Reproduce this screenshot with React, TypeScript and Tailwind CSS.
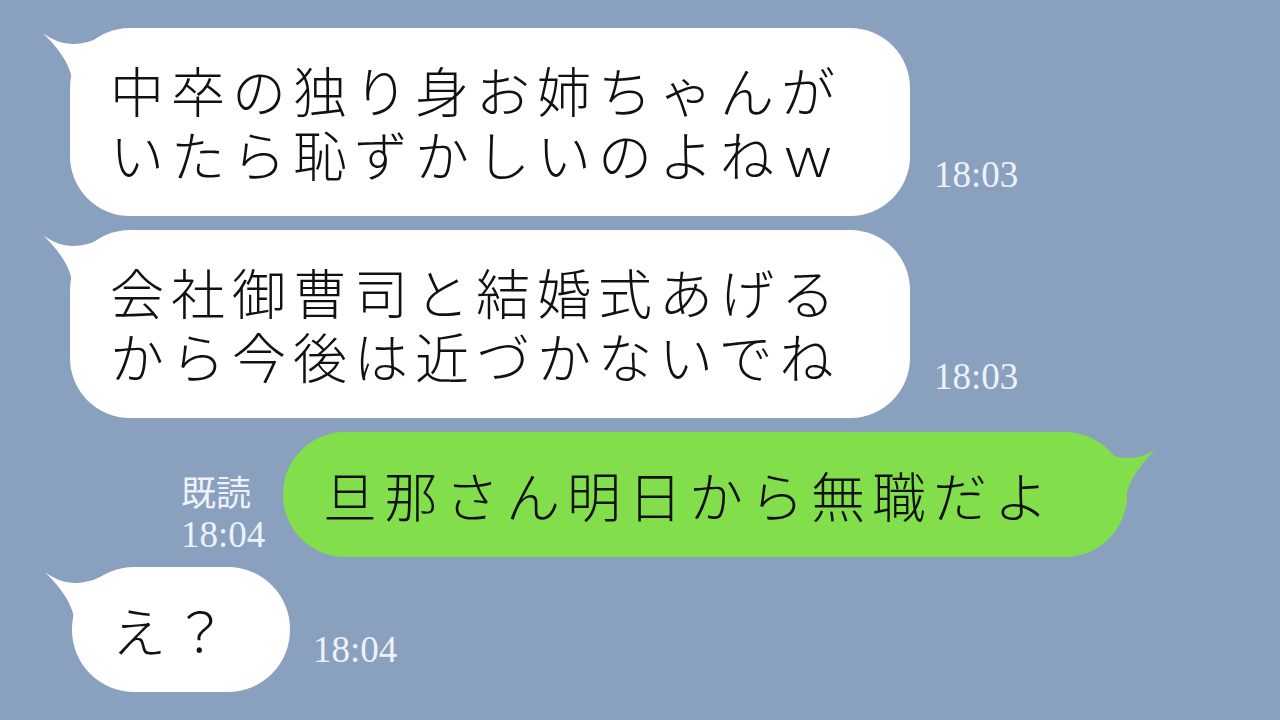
import React from 'react';

const jp = { fontFamily: '"Noto Sans CJK JP", "Noto Sans", sans-serif' };
const serif = { fontFamily: '"Liberation Serif", "Noto Sans CJK JP", serif' };

function LeftTail() {
  return (
    <svg className="absolute left-[-30px] top-0" width="70" height="70" viewBox="0 0 70 70">
      <path d="M3 5 C 20 18, 40 20, 62 8 L 62 70 L 32 70 L 32 50 C 28 32, 16 18, 3 5 Z" fill="#ffffff" />
    </svg>
  );
}

function RightTail() {
  return (
    <svg className="absolute right-[-32px] top-0" width="70" height="70" viewBox="0 0 70 70">
      <path d="M67 16 C 50 30, 28 30, 8 14 L 8 70 L 38 70 L 38 60 C 44 40, 56 30, 67 16 Z" fill="#82df4b" />
    </svg>
  );
}

function Time({ children }: { children: React.ReactNode }) {
  return (
    <span className="text-[37px] leading-none text-[#eef2f8]" style={serif}>
      {children}
    </span>
  );
}

function WhiteBubble({ lines, time }: { lines: string[]; time: string }) {
  return (
    <div className="flex items-end">
      <div
        className="relative ml-[70px] flex h-[188px] w-[840px] flex-col justify-center rounded-[60px] bg-white pl-[40px] text-[54px] font-light leading-[64px] tracking-[7px] text-[#111]"
        style={jp}
      >
        <LeftTail />
        {lines.map((l, i) => (
          <div key={i} className="relative whitespace-nowrap">{l}</div>
        ))}
      </div>
      <div className="mb-[23px] ml-[24px]">
        <Time>{time}</Time>
      </div>
    </div>
  );
}

export default function App() {
  return (
    <div className="flex h-[720px] w-[1280px] flex-col gap-[14px] overflow-hidden bg-[#89a0bf] pt-[28px]">
      <WhiteBubble lines={['中卒の独り身お姉ちゃんが', 'いたら恥ずかしいのよねｗ']} time="18:03" />
      <WhiteBubble lines={['会社御曹司と結婚式あげる', 'から今後は近づかないでね']} time="18:03" />

      {/* sent message */}
      <div className="ml-[181px] flex items-end">
        <div className="flex w-[102px] flex-col text-[#eef2f8]">
          <span className="text-[35px] leading-[43px]" style={serif}>既読</span>
          <span className="mb-[4px] text-[37px] leading-[37px]" style={serif}>18:04</span>
        </div>
        <div
          className="relative flex h-[125px] w-[844px] items-center rounded-[62px] bg-[#82df4b] pl-[40px] text-[54px] font-light tracking-[7px] text-[#111]"
          style={jp}
        >
          <RightTail />
          <span className="relative whitespace-nowrap">旦那さん明日から無職だよ</span>
        </div>
      </div>

      <div className="mt-[-4px] flex items-end">
        <div
          className="relative ml-[72px] flex h-[125px] w-[218px] items-center rounded-[62px] bg-white pl-[40px] text-[54px] font-light tracking-[7px] text-[#111]"
          style={jp}
        >
          <LeftTail />
          <span className="relative whitespace-nowrap">え？</span>
        </div>
        <div className="mb-[24px] ml-[23px]">
          <Time>18:04</Time>
        </div>
      </div>
    </div>
  );
}
